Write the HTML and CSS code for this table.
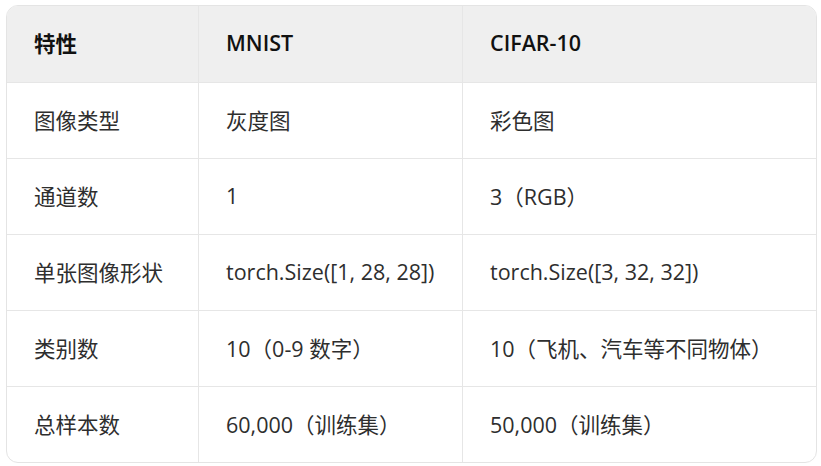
FILE: index.html
```html
<!DOCTYPE html>
<html lang="zh">
<head>
<meta charset="utf-8">
<link rel="stylesheet" href="styles.css">
</head>
<body>
<div class="wrap">
<table class="cmp">
  <colgroup>
    <col class="c1"><col class="c2"><col class="c3">
  </colgroup>
  <thead>
    <tr><th>特性</th><th>MNIST</th><th>CIFAR-10</th></tr>
  </thead>
  <tbody>
    <tr><td>图像类型</td><td>灰度图</td><td>彩色图</td></tr>
    <tr><td>通道数</td><td>1</td><td>3（RGB）</td></tr>
    <tr><td>单张图像形状</td><td>torch.Size([1, 28, 28])</td><td>torch.Size([3, 32, 32])</td></tr>
    <tr><td>类别数</td><td>10（0-9 数字）</td><td>10（飞机、汽车等不同物体）</td></tr>
    <tr><td>总样本数</td><td>60,000（训练集）</td><td>50,000（训练集）</td></tr>
  </tbody>
</table>
</div>
</body>
</html>
```
FILE: styles.css
```css
html, body {
  margin: 0;
  padding: 0;
  background: #ffffff;
}
.wrap {
  padding: 5px 4px 0 6px;
}
.cmp {
  width: 811px;
  table-layout: fixed;
  border-collapse: separate;
  border-spacing: 0;
  border: 1px solid #e4e4e4;
  border-radius: 12px;
  overflow: hidden;
  font-family: "Open Sans", "Noto Sans CJK SC", sans-serif;
  font-size: 21.5px;
  color: #2e2e2e;
}
.c1 { width: 192px; }
.c2 { width: 264px; }
.c3 { width: auto; }
.cmp th, .cmp td {
  text-align: left;
  padding: 0 0 3px 27px;
  height: 72px;
  border-right: 1px solid #e6e6e6;
  border-bottom: 1px solid #e6e6e6;
  white-space: nowrap;
}
.cmp th:last-child, .cmp td:last-child {
  border-right: none;
}
.cmp tbody tr:last-child td {
  border-bottom: none;
}
.cmp th {
  background: #efefef;
  font-weight: 600;
  color: #111111;
  height: 73px;
}
```
